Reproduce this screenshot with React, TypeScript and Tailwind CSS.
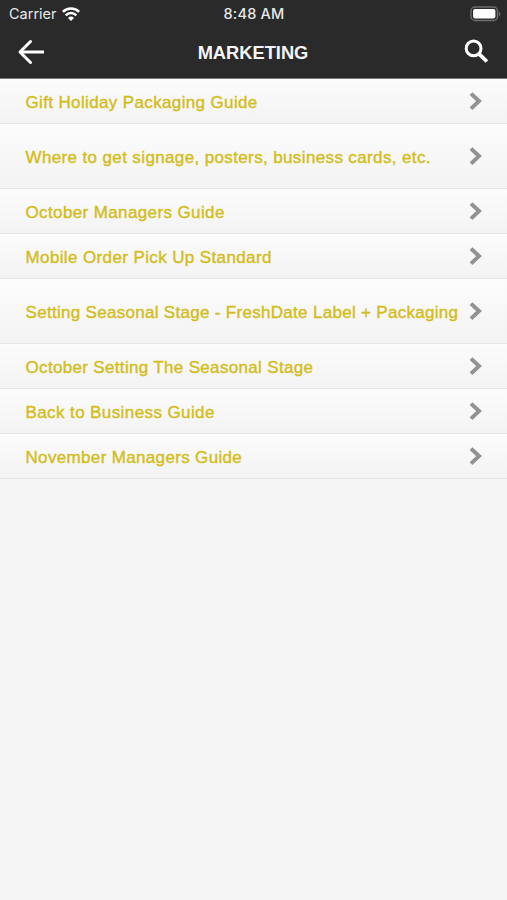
import React from 'react';

type Guide = { title: string; height: string; tracking: string };

const GUIDES: Guide[] = [
  { title: 'Gift Holiday Packaging Guide', height: 'h-[45px]', tracking: 'tracking-[0.36px]' },
  { title: 'Where to get signage, posters, business cards, etc.', height: 'h-[65px]', tracking: 'tracking-[0.37px]' },
  { title: 'October Managers Guide', height: 'h-[45px]', tracking: 'tracking-[0.38px]' },
  { title: 'Mobile Order Pick Up Standard', height: 'h-[45px]', tracking: 'tracking-[0.38px]' },
  { title: 'Setting Seasonal Stage - FreshDate Label + Packaging', height: 'h-[65px]', tracking: 'tracking-[0.3px]' },
  { title: 'October Setting The Seasonal Stage', height: 'h-[45px]', tracking: 'tracking-[0.33px]' },
  { title: 'Back to Business Guide', height: 'h-[45px]', tracking: 'tracking-[0.4px]' },
  { title: 'November Managers Guide', height: 'h-[45px]', tracking: 'tracking-[0.34px]' },
];

const WifiIcon = () => (
  <svg width="18" height="14" viewBox="0 0 18 14" fill="none" stroke="#fff" strokeWidth="2.5">
    <path d="M0.9 4.9 A11.4 11.4 0 0 1 17.1 4.9" />
    <path d="M3.7 8.3 A7.5 7.5 0 0 1 14.3 8.3" />
    <path d="M9 14 L6 11 A4.3 4.3 0 0 1 12 11 Z" fill="#fff" stroke="none" />
  </svg>
);

const BatteryIcon = () => (
  <svg width="31" height="16" viewBox="0 0 31 16">
    <rect x="1" y="1" width="26.5" height="13.5" rx="4" fill="none" stroke="#6c6c6c" strokeWidth="1.4" />
    <rect x="3.1" y="3.1" width="22.3" height="9.3" rx="1.8" fill="#fff" />
    <path d="M28.8 5.4 C30.8 6.2 30.8 9.4 28.8 10.2 Z" fill="#6c6c6c" />
  </svg>
);

const BackIcon = () => (
  <svg width="28" height="26" viewBox="0 0 28 26" fill="none" stroke="#fff" strokeWidth="3">
    <path d="M13.5 2.5 L3 13 L13.5 23.5" strokeLinecap="round" strokeLinejoin="round" />
    <path d="M3 13 H27" />
  </svg>
);

const SearchIcon = () => (
  <svg width="25" height="25" viewBox="0 0 25 25" fill="none" stroke="#fff">
    <circle cx="9.6" cy="9.4" r="7.4" strokeWidth="3" />
    <path d="M15 14.8 L22.9 22.5" strokeWidth="3.8" />
  </svg>
);

const ChevronIcon = () => (
  <svg width="14" height="20" viewBox="0 0 14 20" fill="none" stroke="#929292" strokeWidth="4">
    <path d="M2 2.6 L10 10.1 L2 17.6" />
  </svg>
);

const StatusBar = () => (
  <div className="flex h-[27px] items-center justify-between pl-[9px] pr-[6px] text-[#e8e8e8]">
    <div className="flex flex-1 items-center gap-[5px]">
      <span className="font-['Inter',sans-serif] text-[14.5px] leading-[27px]">Carrier</span>
      <WifiIcon />
    </div>
    <span className="mr-[2px] font-['Inter',sans-serif] text-[14.5px] font-medium leading-[27px] tracking-[0.2px]">
      8:48 AM
    </span>
    <div className="flex flex-1 justify-end">
      <BatteryIcon />
    </div>
  </div>
);

const NavBar = () => (
  <div className="flex h-[49px] items-center justify-between pl-[17px] pr-[18px]">
    <button className="flex w-[28px]" aria-label="Back">
      <BackIcon />
    </button>
    <h1 className="mr-[3px] pt-[3px] text-[18.3px] font-bold leading-[46px] text-[#f5f5f5]">MARKETING</h1>
    <button className="flex w-[25px]" aria-label="Search">
      <SearchIcon />
    </button>
  </div>
);

const GuideRow = ({ title, height, tracking }: Guide) => (
  <li
    className={`${height} flex items-center justify-between border-b border-[#e6e6e6] bg-linear-to-b from-[#fcfcfc] to-[#f3f3f3] pl-[25.5px] pr-[24px]`}
  >
    <span className={`${tracking} whitespace-nowrap pt-[3px] text-[17px] leading-[21px] text-[#d3bd1c] [-webkit-text-stroke:0.4px_#d3bd1c]`}>
      {title}
    </span>
    <ChevronIcon />
  </li>
);

export default function App() {
  return (
    <div className="min-h-screen w-full overflow-hidden bg-[#f5f5f5] font-['Liberation_Sans',Arial,sans-serif]">
      <header className="h-[79px] border-b border-[#777] bg-[#2a2a2a]">
        <StatusBar />
        <NavBar />
      </header>
      <ul>
        {GUIDES.map((guide) => (
          <GuideRow key={guide.title} {...guide} />
        ))}
      </ul>
    </div>
  );
}
